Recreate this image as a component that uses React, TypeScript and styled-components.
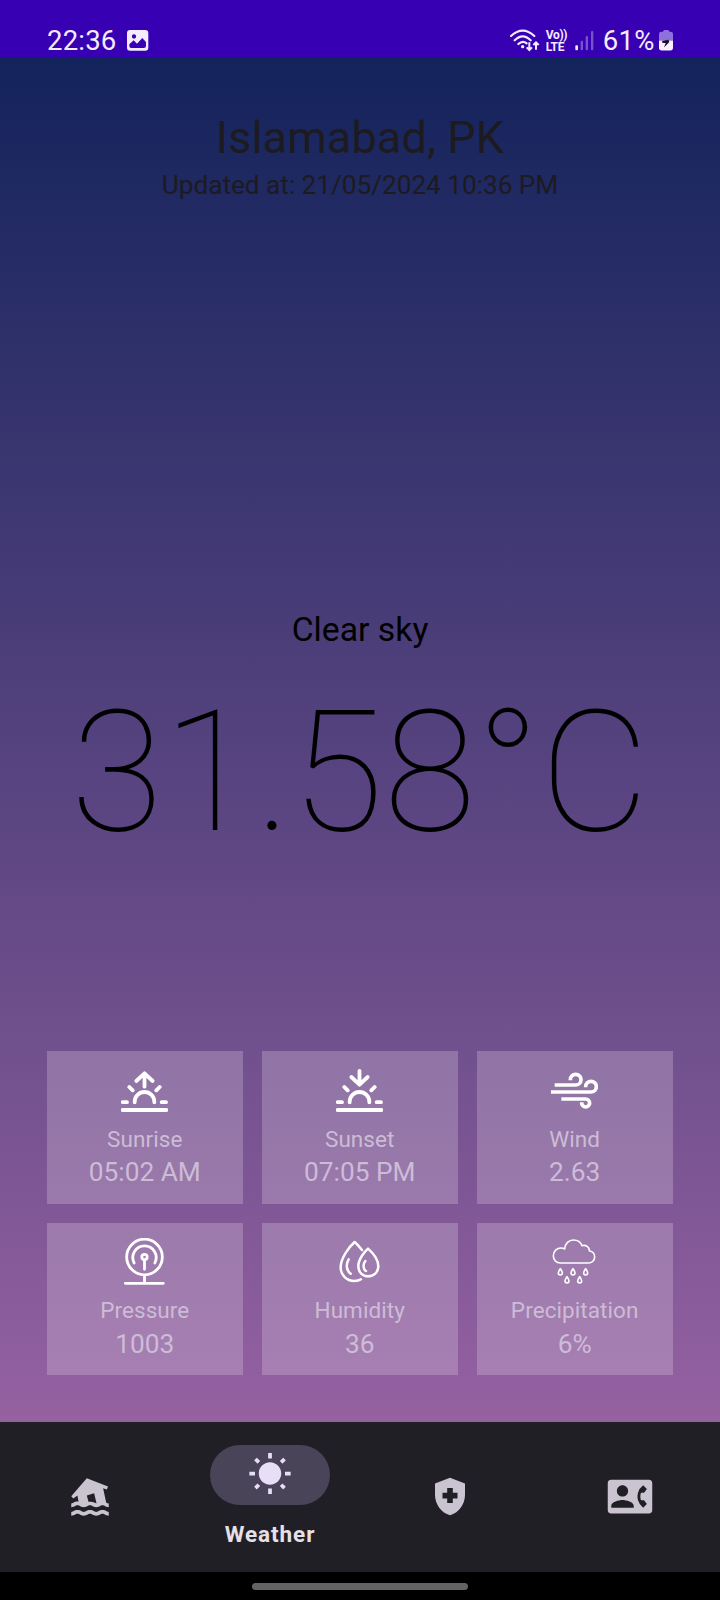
import React from "react";
import styled, { createGlobalStyle } from "styled-components";
import { MdContactPhone, MdHealthAndSafety, MdWbSunny } from "react-icons/md";

const GlobalStyle = createGlobalStyle`
  *, *::before, *::after { box-sizing: border-box; }
  html, body { margin: 0; padding: 0; background: #000; }
  body { font-family: Roboto, "Liberation Sans", sans-serif; }
`;

const Screen = styled.div`
  width: 720px;
  height: 1600px;
  display: flex;
  flex-direction: column;
  overflow: hidden;
`;

const StatusBar = styled.header`
  height: 58px;
  flex: none;
  display: flex;
  justify-content: space-between;
  align-items: flex-start;
  padding: 23.5px 47px 0 47px;
  background: #3700b3;
  color: #f4ebff;
`;

const StatusGroup = styled.div`
  display: flex;
  align-items: center;
  height: 34px;
`;

const StatusText = styled.span<{ $gap: number }>`
  font-size: 27.5px;
  line-height: 34px;
  letter-spacing: 0.2px;
  white-space: nowrap;
  margin-right: ${(p) => p.$gap}px;
`;

const StatusIcon = styled.svg<{ $gap?: number }>`
  display: block;
  flex: none;
  margin-right: ${(p) => p.$gap ?? 0}px;
`;

const VoLte = styled.span`
  display: flex;
  flex-direction: column;
  width: 21px;
  margin-right: 8px;
  font-size: 12px;
  font-weight: 700;
  line-height: 12px;
  letter-spacing: -0.4px;
  white-space: nowrap;
`;

const Weather = styled.main`
  flex: none;
  height: 1364px;
  display: flex;
  flex-direction: column;
  padding: 47px;
  background: linear-gradient(to bottom, #13235b, #9561a1);
`;

const Heading = styled.div`
  text-align: center;
`;

const City = styled.h1`
  margin: 0;
  font-size: 45px;
  line-height: 65px;
  font-weight: 400;
  letter-spacing: 0.15px;
  color: #1d1b20;
`;

const Updated = styled.p`
  margin: 0;
  font-size: 26.25px;
  line-height: 30px;
  letter-spacing: -0.05px;
  color: #1d1b20;
`;

const Reading = styled.section`
  margin-top: 407px;
  text-align: center;
  color: #000;
`;

const Condition = styled.p`
  margin: 0;
  font-size: 33.75px;
  line-height: 46px;
`;

const Temperature = styled.p`
  margin: 8.5px 0 0;
  font-size: 168.75px;
  line-height: 220px;
  font-weight: 100;
  letter-spacing: -0.15px;
  white-space: nowrap;
`;

const Details = styled.section`
  display: grid;
  grid-template-columns: repeat(3, 196.2px);
  grid-auto-rows: 152.5px;
  gap: 18.75px;
  margin: auto 0 0 -0.3px;
`;

const Card = styled.article`
  display: flex;
  flex-direction: column;
  align-items: center;
  padding-top: 15.5px;
  background: rgba(241, 235, 241, 0.235);
  color: #cdbcd7;
`;

const CardIcon = styled.svg`
  display: block;
  width: 47px;
  height: 47px;
  fill: none;
  stroke: #fff;
`;

const CardLabel = styled.span`
  margin-top: 9px;
  font-size: 22.5px;
  line-height: 32px;
  letter-spacing: 0.08px;
`;

const CardValue = styled.span`
  margin-top: 0.5px;
  font-size: 26.25px;
  line-height: 34px;
`;

const NavBar = styled.nav`
  flex: none;
  height: 150px;
  display: grid;
  grid-template-columns: repeat(4, 1fr);
  background: #211f26;
`;

const NavItem = styled.a<{ $active?: boolean }>`
  display: flex;
  flex-direction: column;
  align-items: center;
  justify-content: ${(p) => (p.$active ? "flex-start" : "center")};
  padding-top: ${(p) => (p.$active ? "22.5px" : "0")};
  padding-bottom: ${(p) => (p.$active ? "0" : "1.5px")};
  color: ${(p) => (p.$active ? "#e8def8" : "#cac4d0")};

  svg {
    margin-right: 1px;
    transform: translateX(0.5px);
  }
`;

const Pill = styled.span`
  width: 120px;
  height: 60px;
  display: flex;
  align-items: center;
  justify-content: center;
  border-radius: 30px;
  background: #4a4458;
`;

const NavLabel = styled.span`
  margin-top: 13.5px;
  font-size: 22.5px;
  line-height: 32px;
  font-weight: 700;
  letter-spacing: 0.0417em;
  color: #e6e0e9;
`;

const GestureArea = styled.footer`
  flex: 1;
  display: flex;
  justify-content: center;
  padding-top: 10.5px;
  background: #000;
`;

const GestureHandle = styled.div`
  width: 216px;
  height: 7.5px;
  border-radius: 4px;
  background: #636363;
`;

const PictureIcon = () => (
  <StatusIcon width="21.3" height="20.7" viewBox="0 0 64 62">
    <path
      fill="currentColor"
      fillRule="evenodd"
      d="M9 0H55Q64 0 64 9V53Q64 62 55 62H9Q0 62 0 53V9Q0 0 9 0ZM7 43V48Q7 54 13 54H51Q57 54 57 48V36L46 24L30 41L20 31ZM21 13A6.500 6.500 0 1 0 21 26A6.500 6.500 0 1 0 21 13Z"
    />
  </StatusIcon>
);

const WifiIcon = () => (
  <StatusIcon $gap={6} width="30" height="23" viewBox="0 0 90 69" fill="none" stroke="currentColor" strokeWidth="6.500">
    <path d="M3 21Q38 -11 73 21M14 34Q38 10 62 34M25 45Q38 33 50 43" strokeLinecap="round" />
    <circle cx="38" cy="53" r="5" fill="currentColor" stroke="none" />
    <path d="M58 40V62M50 55L58 63L66 55M78 62V41M70 48L78 40L86 48" strokeWidth="6" />
  </StatusIcon>
);

const SignalIcon = () => (
  <StatusIcon $gap={9} width="19" height="20" viewBox="0 0 57 60" fill="currentColor">
    <rect x="1" y="43" width="8" height="15" rx="3" />
    <g opacity="0.35">
      <rect x="17" y="29" width="7" height="29" rx="3" />
      <rect x="32" y="15" width="7" height="43" rx="3" />
      <rect x="48" y="0" width="7" height="58" rx="3" />
    </g>
  </StatusIcon>
);

const BatteryIcon = () => (
  <StatusIcon width="14" height="20.5" viewBox="0 0 42 61">
    <path fill="#9070dc" d="M12 5Q12 0 17 0H26Q31 0 31 5H35Q42 5 42 12V31H0V12Q0 5 7 5Z" />
    <path fill="#f8f0ff" d="M0 31H42V53Q42 61 34 61H8Q0 61 0 53Z" />
    <path fill="#1a1022" d="M28 29L9 33L11 39H20L15 52L31 36Z" />
  </StatusIcon>
);

const FloodIcon = () => (
  <svg width="45" height="45" viewBox="0 0 24 24" fill="currentColor">
    <path
      fillRule="evenodd"
      d="M10.300 2.200L21.600 6.600L21 8.300L19 7.600L20.900 16.500H6.200L5.300 11.500L3.100 13L2 11.800ZM10.300 11.500L14.200 10.300L15.500 15.700Q13.800 14.700 11.300 15.200Z"
    />
    <path d="M2 15.700C3.240 15.700 3.380 14.700 5.330 14.700C7.240 14.700 7.480 15.700 8.670 15.700C9.910 15.700 10.060 14.800 12 14.800C13.950 14.800 14.090 15.800 15.330 15.800C16.520 15.800 16.760 14.800 18.670 14.800C20.620 14.800 20.760 15.700 22 15.700V17.700C20.050 17.700 19.910 16.700 18.670 16.700C17.480 16.700 17.240 17.700 15.330 17.700C13.390 17.700 13.240 16.700 12 16.700C10.760 16.700 10.620 17.700 8.670 17.700C6.760 17.700 6.520 16.700 5.330 16.700C4.090 16.700 3.950 17.700 2 17.700Z" />
    <path d="M2 20.200C3.240 20.200 3.380 19.200 5.330 19.200C7.240 19.200 7.480 20.200 8.670 20.200C9.910 20.200 10.060 19.200 12 19.200C13.950 19.200 14.090 20.200 15.330 20.200C16.520 20.200 16.760 19.200 18.670 19.200C20.620 19.200 20.760 20.200 22 20.200V22.200C20.050 22.200 19.910 21.200 18.670 21.200C17.480 21.200 17.240 22.200 15.330 22.200C13.390 22.200 13.240 21.200 12 21.200C10.760 21.200 10.620 22.200 8.670 22.200C6.760 22.200 6.520 21.200 5.330 21.200C4.090 21.200 3.950 22.200 2 22.200Z" />
  </svg>
);

const HORIZON = "M41 106V104.500A29.500 29.500 0 0 1 100 104.500V106M25 60L35 70M116 60L106 70M5 105.500H18M122 105.500H135M5 129H136";

const SunriseIcon = () => (
  <CardIcon viewBox="0 0 141 141" strokeWidth="11.500" strokeLinecap="round" strokeLinejoin="round">
    <path d={HORIZON} />
    <path d="M70.500 59V20M46 42L70.500 19L95 42" />
  </CardIcon>
);

const SunsetIcon = () => (
  <CardIcon viewBox="0 0 141 141" strokeWidth="11.500" strokeLinecap="round" strokeLinejoin="round">
    <path d={HORIZON} />
    <path d="M70.500 12V52M46 30L70.500 53L95 30" />
  </CardIcon>
);

const WindIcon = () => (
  <CardIcon viewBox="0 0 141 141" strokeWidth="11">
    <path d="M11 54H74A16 16 0 1 0 58 38V40M0 75H120A16 16 0 1 0 104 59V61M31 96H104A12 12 0 1 1 92 108V106" />
  </CardIcon>
);

const PressureIcon = () => (
  <CardIcon viewBox="0 0 141 141" strokeWidth="8.500" strokeLinecap="round">
    <circle cx="70.500" cy="57" r="53.500" />
    <path d="M39.500 75A35 35 0 1 1 101.500 75" />
    <circle cx="70.500" cy="57" r="8" />
    <path d="M70.500 68V94M70.500 112V134M13 136H127" />
  </CardIcon>
);

const HumidityIcon = () => (
  <CardIcon viewBox="0 0 141 141" strokeWidth="7.500" strokeLinecap="round" strokeLinejoin="round">
    <path d="M78 36C71 27 62 17 56 12C40 26 14 60 14 88C14 112 32 129 55 129C62 129 69 128 75 124" />
    <path d="M96 32C88 39 67 62 67 85C67 103 80 115 96 115C113 115 127 103 127 85C127 62 104 39 96 32Z" />
    <path d="M38 64C29 79 31 98 44 107M88 69C80 79 81 94 90 99" />
  </CardIcon>
);

const DROPS = [
  [28, 102],
  [66, 102],
  [104, 102],
  [48, 126],
  [86, 126],
];

const RainIcon = () => (
  <CardIcon viewBox="0 0 141 141" strokeWidth="4.800" strokeLinejoin="round">
    <path d="M28 75C16 75 7 66 7 53C7 39 18 30 30 30C34 30 38 31 41 33C42 16 54 6 67 6C79 6 89 12 93 23C105 20 115 27 115 38C125 40 131 47 131 57C131 67 123 75 112 75Z" />
    {DROPS.map(([x, y]) => (
      <path key={`${x}-${y}`} transform={`translate(${x} ${y})`} d="M0 -10C-3 -5 -6 -1 -6 3A6 6 0 0 0 6 3C6 -1 3 -5 0 -10Z" />
    ))}
  </CardIcon>
);

const details = [
  { label: "Sunrise", value: "05:02 AM", Icon: SunriseIcon },
  { label: "Sunset", value: "07:05 PM", Icon: SunsetIcon },
  { label: "Wind", value: "2.63", Icon: WindIcon },
  { label: "Pressure", value: "1003", Icon: PressureIcon },
  { label: "Humidity", value: "36", Icon: HumidityIcon },
  { label: "Precipitation", value: "6%", Icon: RainIcon },
];

export default function App() {
  return (
    <>
      <GlobalStyle />
      <Screen>
        <StatusBar>
          <StatusGroup>
            <StatusText $gap={11}>22:36</StatusText>
            <PictureIcon />
          </StatusGroup>
          <StatusGroup>
            <WifiIcon />
            <VoLte>
              <span>Vo))</span>
              <span>LTE</span>
            </VoLte>
            <SignalIcon />
            <StatusText $gap={4.5}>61%</StatusText>
            <BatteryIcon />
          </StatusGroup>
        </StatusBar>
        <Weather>
          <Heading>
            <City>Islamabad, PK</City>
            <Updated>Updated at: 21/05/2024 10:36 PM</Updated>
          </Heading>
          <Reading>
            <Condition>Clear sky</Condition>
            <Temperature>31.58°C</Temperature>
          </Reading>
          <Details>
            {details.map(({ label, value, Icon }) => (
              <Card key={label}>
                <Icon />
                <CardLabel>{label}</CardLabel>
                <CardValue>{value}</CardValue>
              </Card>
            ))}
          </Details>
        </Weather>
        <NavBar>
          <NavItem>
            <FloodIcon />
          </NavItem>
          <NavItem $active>
            <Pill>
              <MdWbSunny size={45} />
            </Pill>
            <NavLabel>Weather</NavLabel>
          </NavItem>
          <NavItem>
            <MdHealthAndSafety size={45} />
          </NavItem>
          <NavItem>
            <MdContactPhone size={45} />
          </NavItem>
        </NavBar>
        <GestureArea>
          <GestureHandle />
        </GestureArea>
      </Screen>
    </>
  );
}
